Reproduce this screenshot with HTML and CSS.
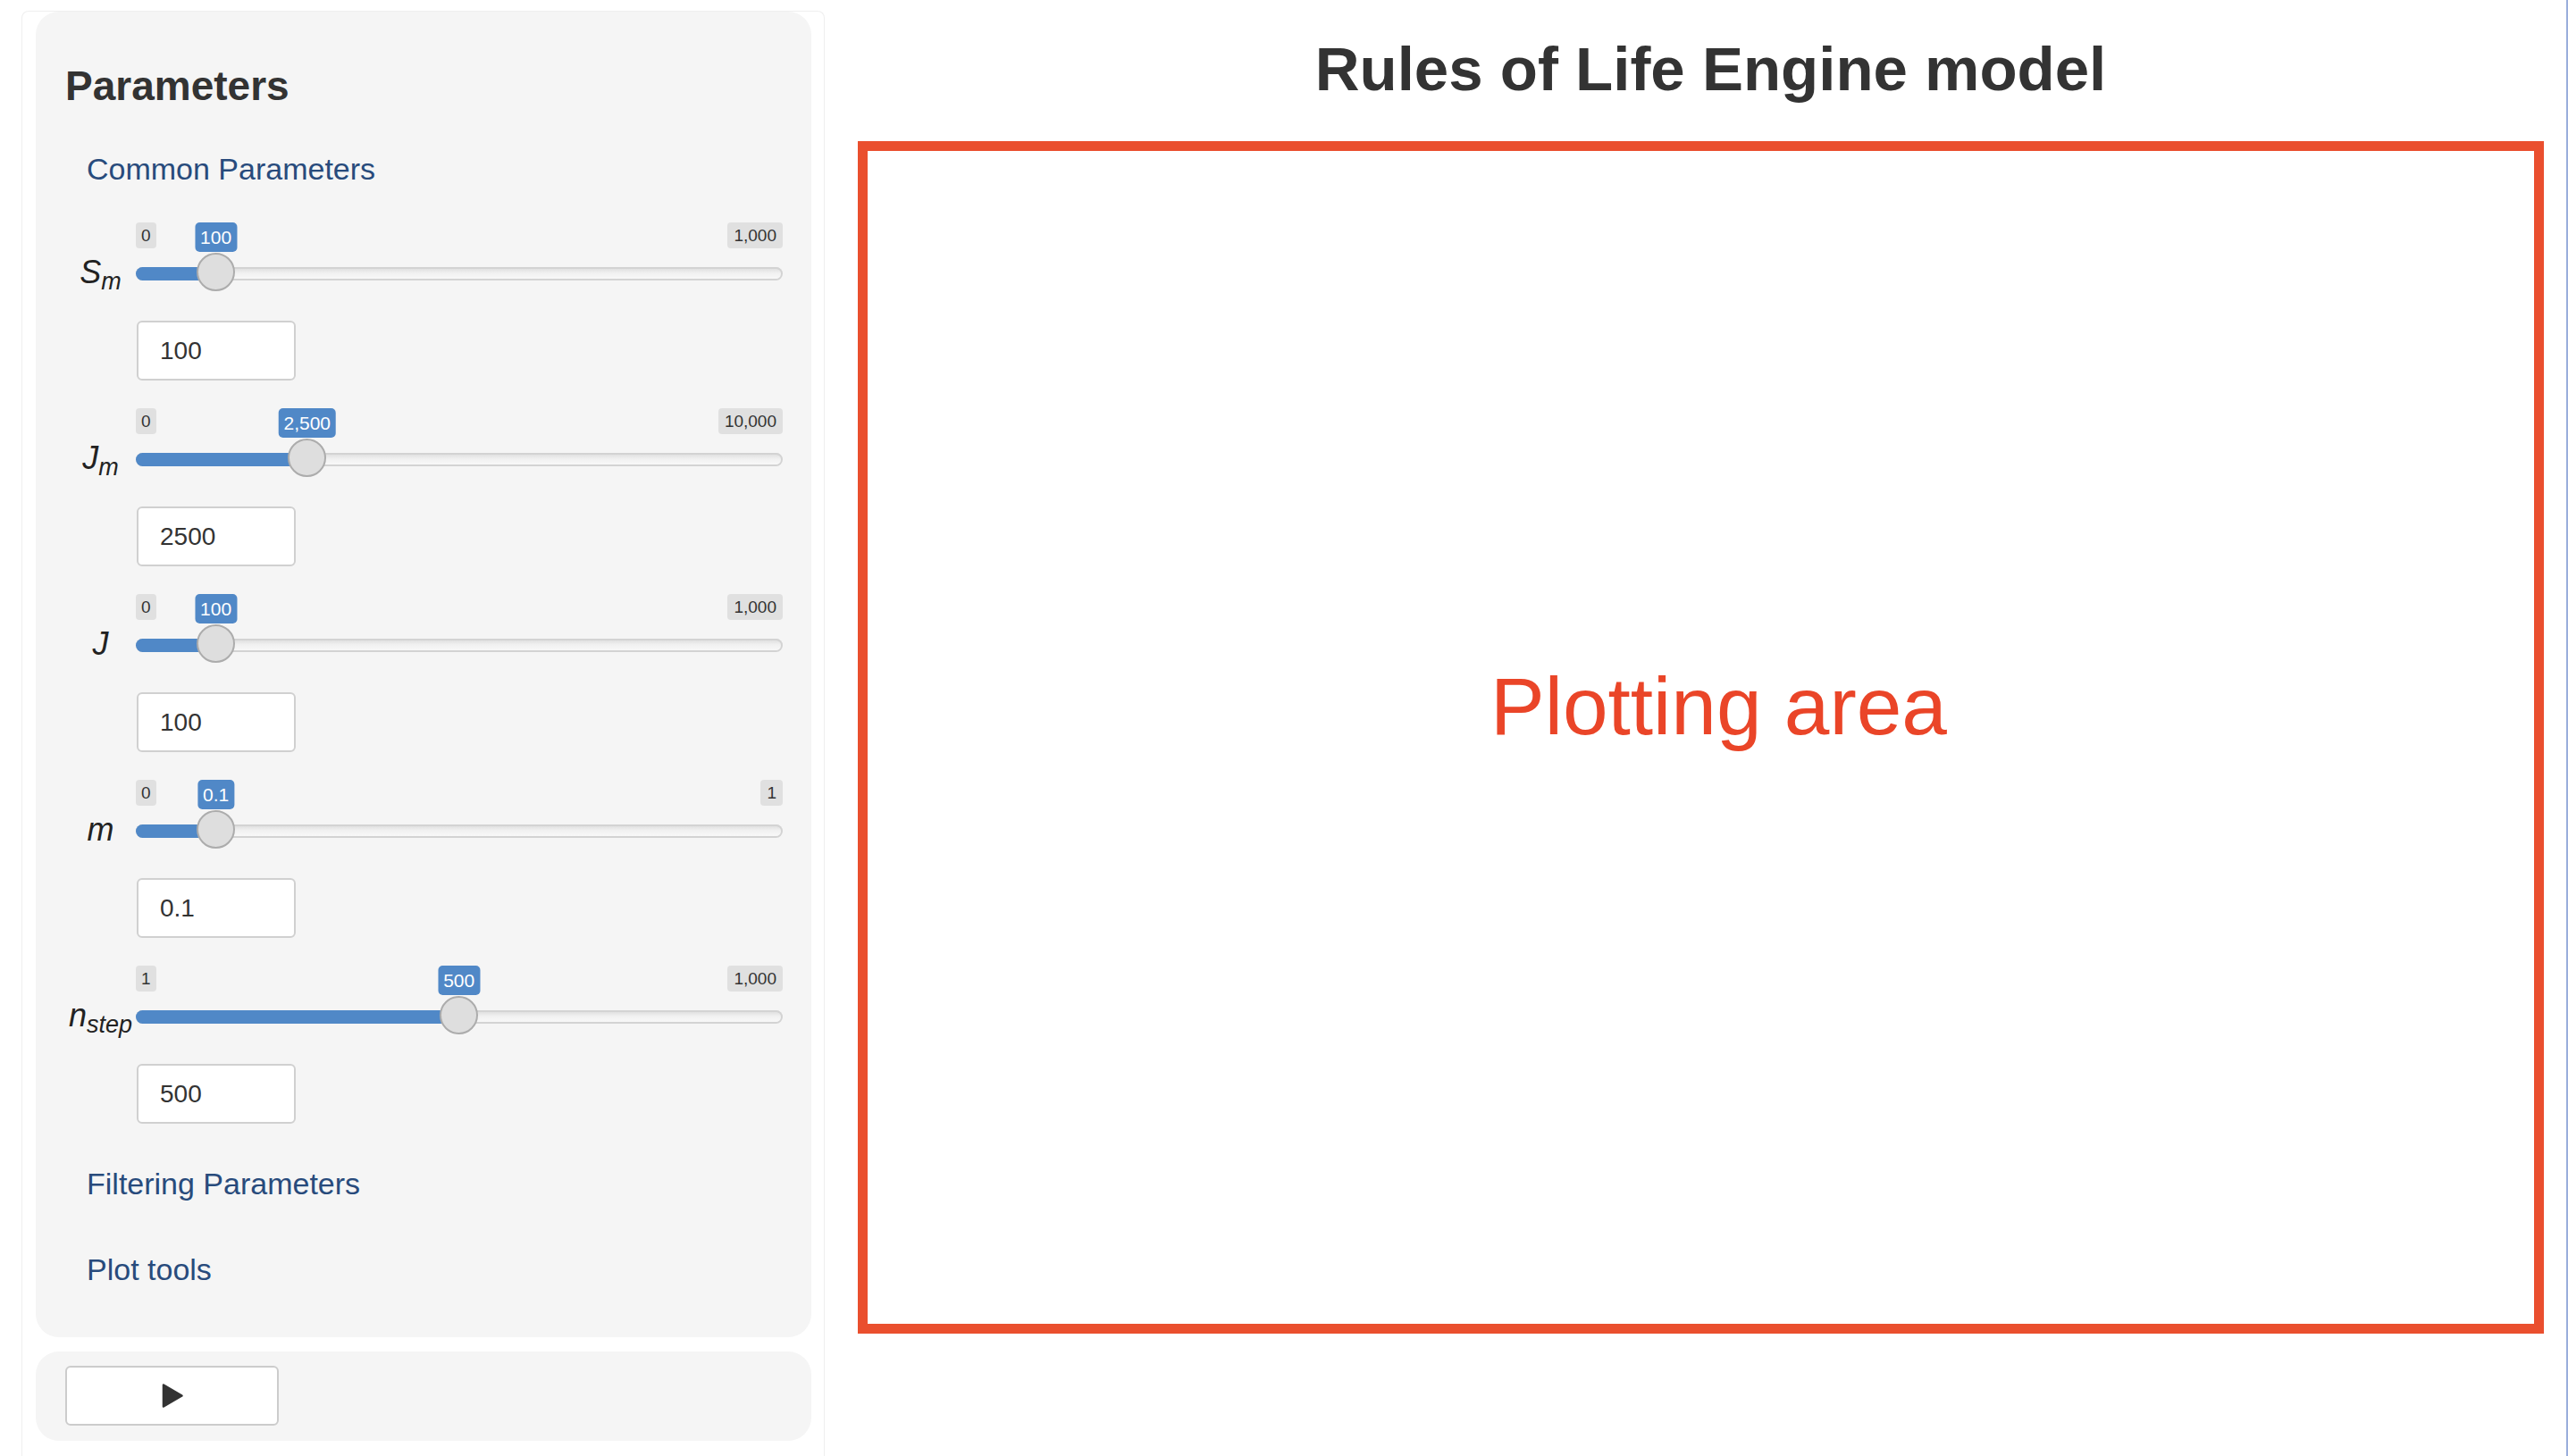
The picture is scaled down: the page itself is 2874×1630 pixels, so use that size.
FILE: index.html
```html
<!DOCTYPE html>
<html lang="en">
<head>
<meta charset="utf-8">
<title>Rules of Life Engine model</title>
<link rel="stylesheet" href="styles.css">
</head>
<body>
<div class="app">
  <aside class="sidebar">
    <div class="well">
      <h3 class="panel-title">Parameters</h3>
      <div class="section">Common Parameters</div>

      <div class="param first">
        <div class="slider-row">
          <div class="sym"><span>S<sub>m</sub></span></div>
          <div class="slider" style="--f:0.1">
            <span class="badge min">0</span>
            <span class="badge max">1,000</span>
            <div class="track"><div class="fill"></div></div>
            <div class="handle"></div>
            <span class="badge val">100</span>
          </div>
        </div>
        <div class="num">100</div>
      </div>

      <div class="param">
        <div class="slider-row">
          <div class="sym"><span>J<sub>m</sub></span></div>
          <div class="slider" style="--f:0.25">
            <span class="badge min">0</span>
            <span class="badge max">10,000</span>
            <div class="track"><div class="fill"></div></div>
            <div class="handle"></div>
            <span class="badge val">2,500</span>
          </div>
        </div>
        <div class="num">2500</div>
      </div>

      <div class="param">
        <div class="slider-row">
          <div class="sym"><span>J</span></div>
          <div class="slider" style="--f:0.1">
            <span class="badge min">0</span>
            <span class="badge max">1,000</span>
            <div class="track"><div class="fill"></div></div>
            <div class="handle"></div>
            <span class="badge val">100</span>
          </div>
        </div>
        <div class="num">100</div>
      </div>

      <div class="param">
        <div class="slider-row">
          <div class="sym"><span>m</span></div>
          <div class="slider" style="--f:0.1">
            <span class="badge min">0</span>
            <span class="badge max">1</span>
            <div class="track"><div class="fill"></div></div>
            <div class="handle"></div>
            <span class="badge val">0.1</span>
          </div>
        </div>
        <div class="num">0.1</div>
      </div>

      <div class="param">
        <div class="slider-row">
          <div class="sym"><span>n<sub>step</sub></span></div>
          <div class="slider" style="--f:0.4995">
            <span class="badge min">1</span>
            <span class="badge max">1,000</span>
            <div class="track"><div class="fill"></div></div>
            <div class="handle"></div>
            <span class="badge val">500</span>
          </div>
        </div>
        <div class="num">500</div>
      </div>

      <div class="section filter">Filtering Parameters</div>
      <div class="section plot-tools">Plot tools</div>
    </div>
    <div class="well2">
      <button class="play" type="button" aria-label="Play">
        <svg width="26" height="29" viewBox="0 0 26 29"><path d="M3 2.5 L23.5 14.5 L3 26.5 Z" fill="#333" stroke="#333" stroke-width="2.5" stroke-linejoin="round"/></svg>
      </button>
    </div>
  </aside>
  <main class="main">
    <h1 class="page-title">Rules of Life Engine model</h1>
    <div class="plot">Plotting area</div>
  </main>
  <div class="edge"></div>
</div>
</body>
</html>
```

FILE: styles.css
```css
html, body {
  margin: 0;
  padding: 0;
  background: #ffffff;
}
body {
  width: 2874px;
  height: 1630px;
  overflow: hidden;
  font-family: "Liberation Sans", Arial, sans-serif;
  color: #333333;
}
.app {
  display: flex;
  height: 1630px;
}
.sidebar {
  margin: 12px 0 0 24px;
  width: 899px;
  flex: none;
  box-sizing: border-box;
  border: 1px solid #efefef;
  border-bottom: none;
  border-radius: 8px 8px 0 0;
  padding: 0 14px 0 15px;
}
.well {
  background: #f5f5f5;
  border-radius: 26px;
  height: 1484px;
  box-sizing: border-box;
  padding: 55px 33px 0 33px;
}
.panel-title {
  margin: 0;
  font-size: 46px;
  line-height: 56px;
  font-weight: 700;
  color: #333333;
}
.section {
  margin: 45px 0 0 24px;
  font-size: 34px;
  line-height: 40px;
  color: #284b7c;
}
.section.filter {
  margin-top: 47px;
}
.section.plot-tools {
  margin-top: 56px;
}
.param {
  margin-top: 31px;
}
.param.first {
  margin-top: 40px;
}
.slider-row {
  display: grid;
  grid-template-columns: 79px 724px;
}
.sym {
  display: flex;
  align-items: center;
  justify-content: center;
  padding-top: 32px;
  font-style: italic;
  font-size: 36px;
  line-height: 40px;
  color: #222222;
}
.sym sub {
  font-size: 27px;
  vertical-align: -7px;
  line-height: 0;
}
.slider {
  position: relative;
  height: 80px;
}
.track {
  position: relative;
  margin-top: 50px;
  height: 15px;
  border-radius: 8px;
  background: linear-gradient(#dadada, #f1f1f1 45%, #fafafa);
  box-shadow: inset 0 0 0 2px #d3d3d3;
}
.fill {
  position: absolute;
  left: 0;
  top: 0;
  bottom: 0;
  width: calc(21.5px + var(--f) * (100% - 43px));
  background: #5088c7;
  border-radius: 8px 0 0 8px;
}
.handle {
  position: absolute;
  top: 34px;
  left: calc(21.5px + var(--f) * (100% - 43px));
  margin-left: -21.5px;
  width: 43px;
  height: 43px;
  box-sizing: border-box;
  border-radius: 50%;
  background: #dedede;
  border: 2px solid #acacac;
}
.badge {
  position: absolute;
  top: 0;
  height: 29px;
  line-height: 30px;
  padding: 0 6px;
  font-size: 19px;
  background: #e0e0e0;
  color: #333333;
  border-radius: 4px;
}
.badge.min {
  left: 0;
}
.badge.max {
  right: 0;
  padding: 0 7px;
}
.badge.val {
  left: calc(21.5px + var(--f) * (100% - 43px));
  transform: translateX(-50%);
  height: 33px;
  line-height: 34px;
  font-size: 21px;
  background: #5088c7;
  color: #ffffff;
  border-radius: 5px;
}
.num {
  margin: 30px 0 0 80px;
  width: 178px;
  height: 67px;
  box-sizing: border-box;
  border: 2px solid #d0d0d0;
  border-radius: 6px;
  background: #ffffff;
  font-size: 28px;
  line-height: 63px;
  padding-left: 24px;
  color: #333333;
}
.well2 {
  margin-top: 16px;
  height: 100px;
  box-sizing: border-box;
  background: #f5f5f5;
  border-radius: 26px;
  padding: 16px 33px;
}
.play {
  width: 239px;
  height: 67px;
  box-sizing: border-box;
  border: 2px solid #cccccc;
  border-radius: 6px;
  background: #ffffff;
  display: flex;
  align-items: center;
  justify-content: center;
  padding: 0;
}
.main {
  flex: 1;
  min-width: 0;
  padding: 0 25px 0 37px;
}
.page-title {
  margin: 38px 0 40px 0;
  padding-left: 22px;
  font-size: 69px;
  line-height: 80px;
  font-weight: 700;
  text-align: center;
  color: #333333;
}
.plot {
  height: 1335px;
  box-sizing: border-box;
  border: 11px solid #ea4f2e;
  text-align: center;
  padding-top: 567px;
  padding-left: 40px;
  font-size: 91px;
  line-height: 110px;
  color: #ea4528;
}
.edge {
  width: 2px;
  flex: none;
  background: #9aaedc;
}
```
